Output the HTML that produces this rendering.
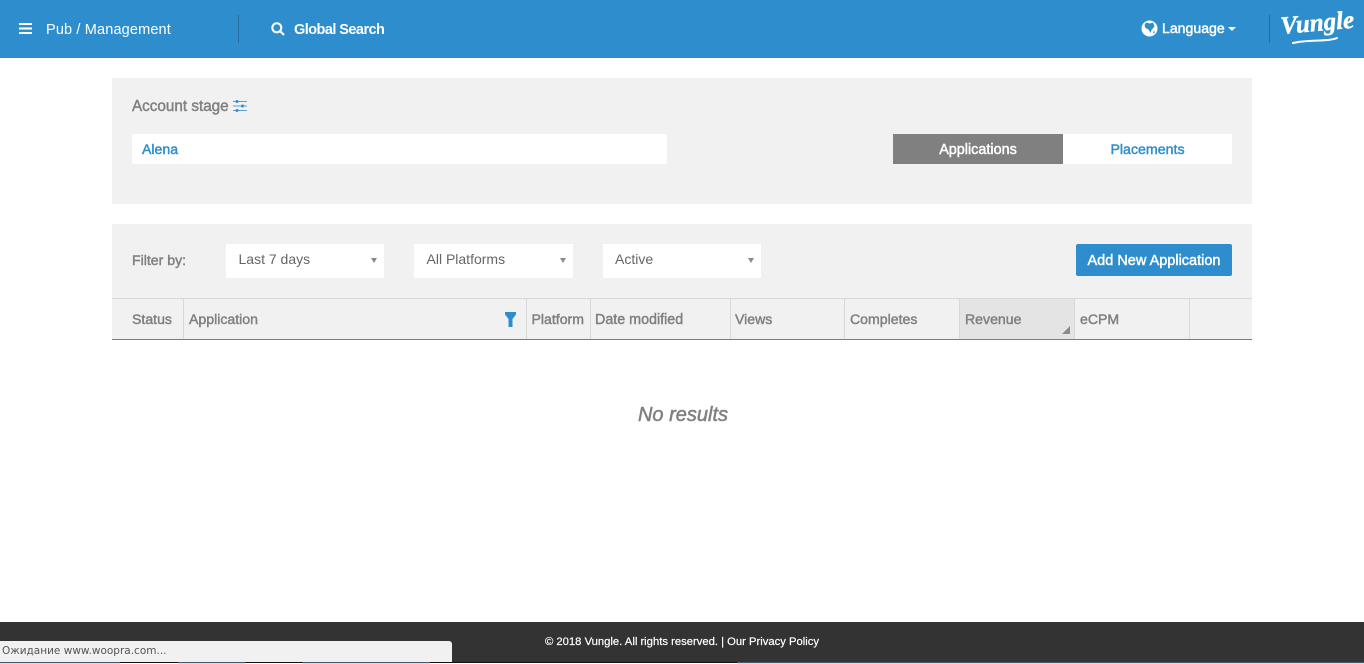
<!DOCTYPE html>
<html><head><meta charset="utf-8"><title>Vungle</title>
<style>
*{box-sizing:border-box}
html,body{margin:0;padding:0;width:1364px;height:664px;overflow:hidden;background:#fff;font-family:"Liberation Sans",sans-serif}
.a{position:absolute;white-space:nowrap}
.h{font-size:14.100px;line-height:18px;color:#808080;-webkit-text-stroke:.45px #808080}
.sel{background:#fff;height:34px;top:244px;font-size:14px;line-height:31px;color:#666;padding-left:12.500px}
.sel:after{content:"";position:absolute;right:7px;top:14px;border-left:3px solid transparent;border-right:3px solid transparent;border-top:5px solid #8a8a8a}
.v{top:299px;width:1px;height:40px;background:#d8d8d8}
.t{top:662px;height:2px}
</style></head><body>
<div class="a" style="left:0;top:0;width:1364px;height:58px;background:#2e8ecd"></div>
<svg class="a" style="left:19px;top:23px" width="13" height="11"><path d="M0 1h13M0 5.500h13M0 10h13" stroke="#fff" stroke-width="2"/></svg>
<div class="a" style="left:46px;top:21px;font-size:14.500px;line-height:18px;color:#fff;letter-spacing:.15px">Pub / Management</div>
<div class="a" style="left:238px;top:15px;width:1px;height:28px;background:#256d9f"></div>
<svg class="a" style="left:271px;top:22px" width="14" height="14"><circle cx="5.800" cy="5.800" r="4.500" fill="none" stroke="#fff" stroke-width="2"/><path d="M9 9l4 4" stroke="#fff" stroke-width="2.200"/></svg>
<div class="a" style="left:294px;top:21px;font-size:14.500px;line-height:18px;font-weight:bold;color:#fff;letter-spacing:-.55px">Global Search</div>
<svg class="a" style="left:1141px;top:20px" width="17" height="17"><circle cx="8.500" cy="8.500" r="8" fill="#fff"/><path d="M5 2.500l4 1 3-1 1.500 4-3 3.500-1 3-2-3.500-3-1.500-1-3zM12 12l2-1-1 3z" fill="#2e8ecd"/></svg>
<div class="a" style="left:1162px;top:19px;font-size:14.100px;line-height:18px;color:#fff;-webkit-text-stroke:.45px #fff">Language</div>
<div class="a" style="left:1228px;top:27px;border-left:4px solid transparent;border-right:4px solid transparent;border-top:4px solid #fff"></div>
<div class="a" style="left:1269px;top:15px;width:1px;height:28px;background:#256d9f"></div>
<div class="a" style="left:1282px;top:12px;font-family:'Liberation Serif',serif;font-style:italic;font-weight:bold;font-size:25px;line-height:30px;color:#fff;-webkit-text-stroke:.5px #fff;transform:rotate(-5deg);transform-origin:0 100%">Vungle</div>
<svg class="a" style="left:1290px;top:34px" width="56" height="12"><path d="M3 9C15 6 28 7 38 6 42 5.500 45 5 47 4" fill="none" stroke="#fff" stroke-width="2" stroke-linecap="round"/></svg>

<div class="a" style="left:112px;top:78px;width:1140px;height:126px;background:#f1f1f1"></div>
<div class="a h" style="left:132px;top:98px;font-size:15.250px">Account stage</div>
<svg class="a" style="left:233px;top:100px" width="14" height="12"><path d="M0 1.500h14M0 6h14M0 10.500h14" stroke="#5a9fd0" stroke-width="1"/><circle cx="4" cy="1.500" r="1.500" fill="#2e8ecd"/><circle cx="9.500" cy="6" r="1.500" fill="#2e8ecd"/><circle cx="4" cy="10.500" r="1.500" fill="#2e8ecd"/></svg>
<div class="a" style="left:132px;top:134px;width:535px;height:30px;background:#fff;border-radius:2px"></div>
<div class="a h" style="left:142px;top:140px;color:#2e8ecd;-webkit-text-stroke:.45px #2e8ecd">Alena</div>
<div class="a" style="left:893px;top:134px;width:170px;height:30px;background:#808080"></div>
<div class="a" style="left:1063px;top:134px;width:169px;height:30px;background:#fff"></div>
<div class="a h" style="left:893px;top:141px;width:170px;text-align:center;font-size:14.400px;color:#fff;-webkit-text-stroke:.45px #fff">Applications</div>
<div class="a h" style="left:1063px;top:141px;width:169px;text-align:center;font-size:14.200px;color:#2e8ecd;-webkit-text-stroke:.45px #2e8ecd">Placements</div>

<div class="a" style="left:112px;top:224px;width:1140px;height:116px;background:#f1f1f1"></div>
<div class="a h" style="left:132px;top:251px">Filter by:</div>
<div class="a sel" style="left:226px;width:158px">Last 7 days</div>
<div class="a sel" style="left:414px;width:159px">All Platforms</div>
<div class="a sel" style="left:603px;width:158px;padding-left:12px">Active</div>
<div class="a" style="left:1076px;top:244px;width:156px;height:32px;background:#2e8ecd;border-radius:2px;color:#fff;font-size:14.500px;line-height:34px;text-align:center;-webkit-text-stroke:.45px #fff">Add New Application</div>

<div class="a" style="left:112px;top:298px;width:1140px;height:1px;background:#d8d8d8"></div>
<div class="a" style="left:960px;top:299px;width:115px;height:40px;background:#e4e4e4"></div>
<div class="a" style="left:112px;top:339px;width:1140px;height:1px;background:#7d7d7d"></div>
<div class="a v" style="left:183px"></div><div class="a v" style="left:526px"></div><div class="a v" style="left:590px"></div><div class="a v" style="left:730px"></div><div class="a v" style="left:844px"></div><div class="a v" style="left:959px"></div><div class="a v" style="left:1074px"></div><div class="a v" style="left:1189px"></div>
<div class="a h" style="left:132px;top:310px">Status</div>
<div class="a h" style="left:189px;top:310px">Application</div>
<svg class="a" style="left:505px;top:312px" width="11" height="15"><path d="M0 0h11v2.500L7.500 7v8h-4V7L0 2.500z" fill="#2e8ecd"/></svg>
<div class="a h" style="left:531.500px;top:310px">Platform</div>
<div class="a h" style="left:595px;top:311px;font-size:14.300px">Date modified</div>
<div class="a h" style="left:735px;top:310px">Views</div>
<div class="a h" style="left:850px;top:310px">Completes</div>
<div class="a h" style="left:965px;top:310px">Revenue</div>
<svg class="a" style="left:1062px;top:326px" width="9" height="9"><path d="M8 0v8H0z" fill="#8a8a8a"/></svg>
<div class="a h" style="left:1080px;top:310px">eCPM</div>

<div class="a" style="left:1px;top:403px;width:1364px;text-align:center;font-size:20px;line-height:24px;font-style:italic;color:#808080;-webkit-text-stroke:.5px #808080">No results</div>

<div class="a" style="left:0;top:622px;width:1364px;height:42px;background:#333"></div>
<div class="a" style="left:545px;top:635px;font-size:11.250px;line-height:14px;color:#fff;-webkit-text-stroke:.2px #fff">© 2018 Vungle. All rights reserved. | Our Privacy Policy</div>
<div class="a" style="left:0;top:641px;width:452px;height:21px;background:#f1f1f1;border-top-right-radius:3px;font-family:'DejaVu Sans',sans-serif;font-size:10.500px;line-height:20px;color:#555;padding-left:2px">Ожидание www.woopra.com...</div>
<div class="a t" style="left:0;width:1364px;background:#cfe0ec;border-top:1px solid #4a5a68"></div>
<div class="a t" style="left:120px;width:58px;background:#fff;border-top:1px solid #111"></div>
<div class="a t" style="left:245px;width:58px;background:#fff;border-top:1px solid #111"></div>
<div class="a t" style="left:430px;width:307px;background:#fff;border-top:1px solid #111"></div>
</body></html>
